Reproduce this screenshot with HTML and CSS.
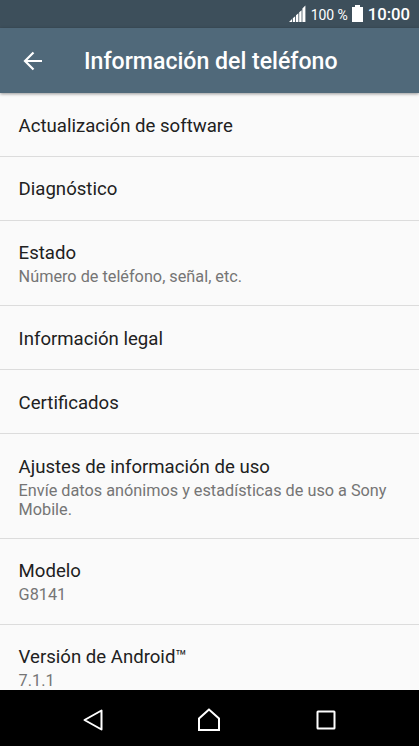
FILE: index.html
```html
<!DOCTYPE html>
<html lang="es">
<head>
<meta charset="utf-8">
<title>Información del teléfono</title>
<link rel="stylesheet" href="styles.css">
</head>
<body>
<div class="status">
<svg class="signal" width="18" height="18" viewBox="0 0 18 18"><path d="M0 17l3-3v3zM3.800 13.200l2.400-1.900V17H3.800zM7 10.200l2.400-2V17H7zM10.200 7.200l2.400-2V17h-2.400zM13.400 3.500l3-3V17h-3z" fill="#fff"/></svg>
<span class="percent">100 %</span>
<svg class="battery" width="11" height="17" viewBox="0 0 11 17"><path d="M3 0h5v2h3v15H0V2h3z" fill="#fff"/></svg>
<span class="clock">10:00</span>
</div>
<header class="bar">
<svg class="back" width="20" height="20" viewBox="0 0 20 20"><path d="M19 10H2M10.500 1.500L2 10l8.500 8.500" fill="none" stroke="#fff" stroke-width="2.200"/></svg>
<h1>Información del teléfono</h1>
</header>
<main class="list">
<div class="row"><div class="title">Actualización de software</div></div>
<div class="row"><div class="title">Diagnóstico</div></div>
<div class="row"><div class="title">Estado</div><div class="sub">Número de teléfono, señal, etc.</div></div>
<div class="row"><div class="title">Información legal</div></div>
<div class="row"><div class="title">Certificados</div></div>
<div class="row"><div class="title">Ajustes de información de uso</div><div class="sub">Envíe datos anónimos y estadísticas de uso a Sony Mobile.</div></div>
<div class="row"><div class="title">Modelo</div><div class="sub">G8141</div></div>
<div class="row"><div class="title">Versión de Android™</div><div class="sub">7.1.1</div></div>
</main>
<nav class="nav">
<svg width="24" height="26" viewBox="0 0 24 26"><path d="M20.500 3.500v19L3.500 13z" fill="none" stroke="#fff" stroke-width="2" stroke-linejoin="round"/></svg>
<svg class="home" width="24" height="26" viewBox="0 0 24 26"><path d="M12 2.500L2 11.500v11.500h20V11.500z" fill="none" stroke="#fff" stroke-width="2"/></svg>
<svg width="20" height="20" viewBox="0 0 20 20"><rect x="1.500" y="1.500" width="17" height="17" rx=".5" fill="none" stroke="#fff" stroke-width="2"/></svg>
</nav>
</body>
</html>
```
FILE: styles.css
```css
* { box-sizing: border-box; }
body { margin: 0; width: 419px; height: 746px; overflow: hidden; display: flex; flex-direction: column; font-family: Roboto, sans-serif; background: #fafafa; }
.status { height: 28px; flex: none; background: #3d4f5b; color: #fff; display: flex; align-items: center; justify-content: flex-end; padding-right: 9px; }
.signal { flex: none; }
.percent { font-size: 14px; letter-spacing: -0.1px; margin: 2px 4px 0 4px; }
.battery { flex: none; margin-bottom: 1px; }
.clock { font-size: 16.7px; font-weight: 500; margin: 1px 0 0 5px; }
.bar { height: 65px; flex: none; background: #50697a; display: flex; align-items: center; padding-left: 23px; box-shadow: 0 1px 3px #0006; position: relative; color: #fff; }
.back { flex: none; }
h1 { margin: 3px 0 0 41px; font-size: 23.1px; font-weight: 500; line-height: 28px; white-space: nowrap; }
.list { flex: 1; min-height: 0; overflow: hidden; }
.row { padding: 20.6px 18px 18.2px 18.6px; border-bottom: 1px solid #dcdcdc; }
.title { font-size: 18.6px; line-height: 24px; color: #212121; }
.sub { font-size: 16.25px; line-height: 19.2px; color: #757575; padding: 2px 0 0.8px; }
.nav { height: 56px; flex: none; background: #000; display: flex; align-items: center; justify-content: space-between; padding: 4px 83px 0 81px; }
.home { margin-right: 3px; }
```
